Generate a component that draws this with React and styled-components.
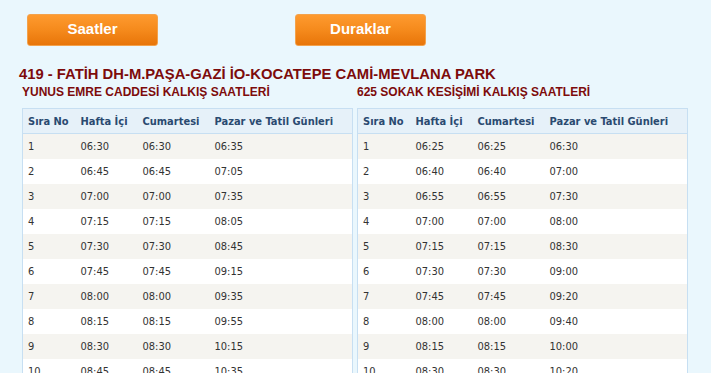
import React from "react";
import styled, { createGlobalStyle } from "styled-components";

const Global = createGlobalStyle`
  html, body { margin: 0; padding: 0; overflow: hidden; }
  body { background: #eaf7fd; font-family: "Liberation Sans", Arial, sans-serif; }
`;

const Page = styled.div`
  padding: 14px 0 0 0;
`;

const ButtonBar = styled.div`
  display: flex;
  gap: 137px;
  padding-left: 27px;
`;

const NavButton = styled.button`
  width: 131px;
  height: 32px;
  border: 1px solid #f3a24c;
  border-radius: 3px;
  background: linear-gradient(to bottom, #fe9a2f 0%, #f58a1c 50%, #e87509 100%);
  color: #fff;
  font-family: "Liberation Sans", Arial, sans-serif;
  font-weight: bold;
  font-size: 15px;
  padding: 0 0 4px 0;
  cursor: pointer;
`;

const Title = styled.h1`
  margin: 19px 0 0 19px;
  font-family: "Liberation Sans", Arial, sans-serif;
  font-weight: bold;
  font-size: 14.8px;
  line-height: 18px;
  color: #7d0b0b;
`;

const Columns = styled.div`
  display: grid;
  grid-template-columns: 331px 331px;
  column-gap: 4px;
  padding-left: 22px;
  margin-top: 2px;
`;

const Section = styled.div`
  display: flex;
  flex-direction: column;
`;

const SubTitle = styled.h2`
  margin: 0 0 8px 0;
  font-family: "Liberation Sans", Arial, sans-serif;
  font-weight: bold;
  font-size: 12px;
  line-height: 15px;
  color: #7d0b0b;
`;

const Table = styled.table`
  width: 100%;
  table-layout: fixed;
  border-collapse: collapse;
  border: 1px solid #c7dff2;
  font-family: "DejaVu Sans Condensed", "DejaVu Sans", sans-serif;
  font-size: 11px;
  color: #333;
`;

const HeadCell = styled.th`
  box-sizing: border-box;
  text-align: left;
  font-weight: bold;
  color: #2a4a70;
  background: #e6f1f9;
  height: 25px;
  padding: 0 0 0 5px;
  border-bottom: 1px solid #c7dff2;
  white-space: nowrap;
  width: ${(p) => p.$w || "auto"};
`;

const Row = styled.tr`
  background: ${(p) => (p.$odd ? "#f5f4f0" : "#ffffff")};
`;

const Cell = styled.td`
  height: 25px;
  padding: 0 0 0 5px;
`;

const left = [
  ["1", "06:30", "06:30", "06:35"],
  ["2", "06:45", "06:45", "07:05"],
  ["3", "07:00", "07:00", "07:35"],
  ["4", "07:15", "07:15", "08:05"],
  ["5", "07:30", "07:30", "08:45"],
  ["6", "07:45", "07:45", "09:15"],
  ["7", "08:00", "08:00", "09:35"],
  ["8", "08:15", "08:15", "09:55"],
  ["9", "08:30", "08:30", "10:15"],
  ["10", "08:45", "08:45", "10:35"],
];

const right = [
  ["1", "06:25", "06:25", "06:30"],
  ["2", "06:40", "06:40", "07:00"],
  ["3", "06:55", "06:55", "07:30"],
  ["4", "07:00", "07:00", "08:00"],
  ["5", "07:15", "07:15", "08:30"],
  ["6", "07:30", "07:30", "09:00"],
  ["7", "07:45", "07:45", "09:20"],
  ["8", "08:00", "08:00", "09:40"],
  ["9", "08:15", "08:15", "10:00"],
  ["10", "08:30", "08:30", "10:20"],
];

function Schedule({ title, rows }) {
  return (
    <Section>
      <SubTitle>{title}</SubTitle>
      <Table>
        <thead>
          <tr>
            <HeadCell $w="53px">Sıra No</HeadCell>
            <HeadCell $w="62px">Hafta İçi</HeadCell>
            <HeadCell $w="72px">Cumartesi</HeadCell>
            <HeadCell>Pazar ve Tatil Günleri</HeadCell>
          </tr>
        </thead>
        <tbody>
          {rows.map((r, i) => (
            <Row key={i} $odd={i % 2 === 0}>
              {r.map((c, j) => (
                <Cell key={j}>{c}</Cell>
              ))}
            </Row>
          ))}
        </tbody>
      </Table>
    </Section>
  );
}

export default function App() {
  return (
    <>
      <Global />
      <Page>
        <ButtonBar>
          <NavButton>Saatler</NavButton>
          <NavButton>Duraklar</NavButton>
        </ButtonBar>
        <Title>419 - FATİH DH-M.PAŞA-GAZİ İO-KOCATEPE CAMİ-MEVLANA PARK</Title>
        <Columns>
          <Schedule title="YUNUS EMRE CADDESİ KALKIŞ SAATLERİ" rows={left} />
          <Schedule title="625 SOKAK KESİŞİMİ KALKIŞ SAATLERİ" rows={right} />
        </Columns>
      </Page>
    </>
  );
}
